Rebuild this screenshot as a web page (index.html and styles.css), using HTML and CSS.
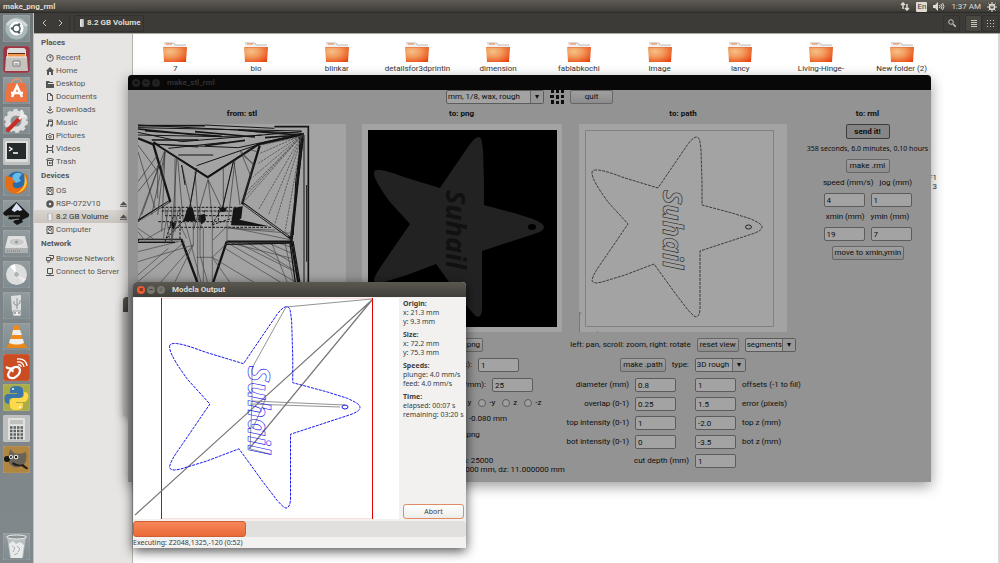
FILE: index.html
```html
<!DOCTYPE html>
<html lang="en">
<head>
    <meta charset="UTF-8">
    <meta name="viewport" content="width=device-width, initial-scale=1.0">
    <title>make_png_rml</title>
    <link rel="stylesheet" href="styles.css">
</head>
<body>
    <svg class="defs" width="0" height="0" aria-hidden="true">
        <defs>
            <radialGradient id="folderFill" cx=".3" cy=".3" r=".9">
                <stop offset="0" stop-color="#f6c088"/><stop offset=".4" stop-color="#f29a5c"/><stop offset="1" stop-color="#e8400c"/>
            </radialGradient>
            <path id="star" vector-effect="non-scaling-stroke" d="M13 49C13 46 15 46 19 46C28 47 37 51 46 54L79 64L96 39L109 20C112 16 115 13 118 13C121 14 121 18 122 26L123 58V81L153 89L172 95C178 98 183 100 183 103C183 106 179 108 173 110L121 127V154L121 184C121 189 120 192 117 193C114 192 112 189 109 186L96 169L75 140L46 151L23 158C19 159 13 160 13 156C14 151 18 145 23 138L49 100L29 78C24 71 13 56 13 49Z"/>
            <symbol id="folder" viewBox="0 0 24 20">
                <path d="M1 6V1h10l1 2h11v4z" fill="#f0f0f0"/><path d="M1 1h10l1 2h11" stroke="#bbb" fill="none"/><path d="M3 2h6" stroke="#f08040"/>
                <path d="M0 5h24l-1 15H1z" fill="url(#folderFill)"/><path d="M1 5.500h22" stroke="#dd7447" stroke-opacity=".6"/>
            </symbol>
        </defs>
    </svg>

    <header class="panel">
        <span class="panel-title">make_png_rml</span>
        <div class="indicators">
            <svg width="10" height="9" viewBox="0 0 10 9" fill="none" stroke="#dfdbd2" stroke-width="1.5"><path d="M3 7V1M1 3l2-2 2 2M7 2v6M5 6l2 2 2-2"/></svg>
            <span class="lang">En</span>
            <svg width="12" height="9" viewBox="0 0 12 9"><path d="M0 3h2l3-3v9L2 6H0z" fill="#dfdbd2"/><path d="M6.500 3q1 1.500 0 3M8 2q2 2.500 0 5M9.500 1q3 3.500 0 7" stroke="#dfdbd2" fill="none"/></svg>
            <span>1:37 AM</span>
            <svg width="10" height="10" viewBox="0 0 10 10" fill="none" stroke="#dfdbd2"><circle cx="5" cy="5" r="2.500" stroke-width="1.500"/><path d="M5 0v5M0 5h2M8 5h2M1.500 1.500l1.500 1.500M7 7l1.500 1.500M8.500 1.500L7 3M3 7L1.500 8.500M5 8v2"/></svg>
        </div>
    </header>

    <div class="desktop">
        <nav class="launcher" aria-label="Launcher">
            <div class="apps">
                <button class="app" aria-label="Dash"><svg viewBox="0 0 27 27"><circle cx="13.500" cy="13.500" r="11" fill="#a9b8bb"/><path d="M4 10Q12 0 24 11" stroke="#d2dadb" stroke-width="3" fill="none"/><circle cx="13.500" cy="13.500" r="7" fill="#fff"/><circle cx="13.500" cy="13.500" r="3.500" fill="none" stroke="#4d5a60" stroke-width="1.500"/><circle cx="9" cy="13.500" r="1.300" fill="#4d5a60"/><circle cx="16" cy="9.500" r="1.300" fill="#4d5a60"/><circle cx="16" cy="17.500" r="1.300" fill="#4d5a60"/></svg></button>
                <button class="app files" aria-label="Files"><svg viewBox="0 0 27 27"><path d="M4 5q0-3 3-3h13q3 0 3 3v8H4z" fill="#ddd"/><path d="M5 7h17v4H5z" fill="#532d16"/><path d="M5 8h17v3H5z" fill="#f19a4e"/><path d="M3 11h21l1 14H2z" fill="#c6c3be"/><path d="M3 11h21" stroke="#eee"/><path d="M10 15h7v5h-7z" fill="#eee" stroke="#777"/><path d="M11.500 18h4" stroke="#777"/></svg></button>
                <button class="app" aria-label="Software Center"><svg viewBox="0 0 27 27"><path d="M8 8q1-6 6-6t5 6" fill="none" stroke="#f09063" stroke-width="1.500"/><path d="M4 6h19l2 19H2z" fill="#ed7442"/><path d="M9 20l5-11 5 11M8 16h12" fill="none" stroke="#fff" stroke-width="2.500"/></svg></button>
                <button class="app" aria-label="System Settings"><svg viewBox="0 0 27 27"><circle cx="13" cy="14" r="8" fill="none" stroke="#ddd" stroke-width="5"/><circle cx="13" cy="14" r="11" fill="none" stroke="#ddd" stroke-width="2" stroke-dasharray="4 3"/><path d="M5 23L17 11" stroke="#c92d26" stroke-width="4" stroke-linecap="round"/><path d="M16 12L21 7" stroke="#eee" stroke-width="3"/><path d="M19 3q-2 6 4 6" stroke="#eee" stroke-width="2" fill="none"/></svg></button>
                <button class="app light" aria-label="Terminal"><svg viewBox="0 0 27 27"><rect x="2" y="3" width="23" height="21" rx="1" fill="#ddd"/><rect x="4" y="5" width="19" height="16" fill="#252a2b"/><path d="M6 9l3 2-3 2M10 15h5" fill="none" stroke="#fff" stroke-width="1.300"/></svg></button>
                <button class="app" aria-label="Firefox"><svg viewBox="0 0 27 27"><circle cx="14" cy="13" r="10.500" fill="#2a6bb0"/><path d="M10 6q4-4 9-1l-3 4 2 3-5 2-4-4z" fill="#65bde7"/><path d="M3 7q-4 17 11 18 11-1 11-14 0-5-4-7 5 12-5 15-7 1-6-5l3-1q-3-1-4-5z" fill="#e66c16"/><path d="M21 5q5 8 1 14-4 5-9 5 11-4 8-19" fill="#fbc83a"/></svg></button>
                <button class="app" aria-label="Inkscape"><svg viewBox="0 0 27 27"><path d="M13.500 2L26 14q1 3-3 4l-4 2 1 2-6 3-4-3 2-2-7-1 1-2-5-2q-2-2 1-4z" fill="#151515"/><path d="M13.500 3l6 7-3 1-2-1-3 2-3-2z" fill="#d7e1ef"/><path d="M4 16h13M9 20l7-1" stroke="#909798"/></svg></button>
                <button class="app" aria-label="Disk"><svg viewBox="0 0 27 27"><path d="M5 6h17l3 12H2z" fill="#ddd"/><path d="M2 18h23v5H2z" fill="#aeb0b0"/><ellipse cx="13.500" cy="12" rx="8" ry="4" fill="#c9caca" stroke="#eee"/><path d="M4 21h14" stroke="#777" stroke-dasharray="1 1"/><circle cx="13.500" cy="12" r="1.500" fill="#999"/></svg></button>
                <button class="app" aria-label="Disc"><svg viewBox="0 0 27 27"><circle cx="13.500" cy="13.500" r="10.500" fill="#dcdddd"/><path d="M13.500 13.500L7 5l5-2z" fill="#fff"/><path d="M13.500 13.500L20 22l3-4z" fill="#f4e8ef"/><circle cx="13.500" cy="13.500" r="3" fill="#afb4b5" stroke="#eee"/></svg></button>
                <button class="app" aria-label="USB drive"><svg viewBox="0 0 27 27"><path d="M8 4l10-1v17H9z" fill="#dde0e1"/><path d="M10 19h8v5h-8z" fill="#f0f0f0" stroke="#999"/><path d="M11 21h2M15 21h2" stroke="#555"/><path d="M14 6v11M11 9v3l3 2M17 8v3l-3 2" fill="none" stroke="#8d9294"/></svg></button>
                <button class="app" aria-label="VLC"><svg viewBox="0 0 27 27"><path d="M6 20h15l4 5H3z" fill="#e88717"/><path d="M11 3q3-2 5 0l5 18q-7 4-15 0z" fill="#f28a1c"/><path d="M10 7h7l2 5H9zM7 16h13l1 4q-7 3-15 0z" fill="#eee"/></svg></button>
                <button class="app red" aria-label="Feed reader"><svg viewBox="0 0 27 27" fill="none" stroke="#fff"><path d="M3 13q4 3 9 0-6 3-7 8 1 4 6 3 6-3 6-8-1-4-5-3-4 1-2 5" stroke-width="2.200"/><path d="M14 8q6-1 7 5M14 5q9-1 10 7M15 11q3-1 3 2" stroke-width="1.300"/></svg></button>
                <button class="app olive" aria-label="Python"><svg viewBox="0 0 27 27"><path d="M13 2q-6 0-6 4v3h7v1H4q-4 2-2 8 1 2 4 2v-3q0-3 4-3h6q4 0 4-4V6q0-4-7-4z" fill="#3b75a9"/><path d="M14 26q6 0 6-4v-3h-7v-1h9q4-2 3-8-1-2-4-2v3q0 3-4 3h-6q-4 0-4 4v4q0 4 6 4z" fill="#ffd94a"/><circle cx="10" cy="5" r="1" fill="#fff"/><circle cx="17" cy="23" r="1" fill="#fff"/></svg></button>
                <button class="app light" aria-label="Calculator"><svg viewBox="0 0 27 27"><rect x="5" y="3" width="17" height="22" rx="1" fill="#e0e1df"/><path d="M7 5h13v4H7z" fill="#bfc1bc"/><path d="M7 12.500h13M7 16h13M7 19.500h13M7 23h13" stroke="#5d6464" stroke-width="2.500" stroke-dasharray="2.500 1"/></svg></button>
                <button class="app brown" aria-label="GIMP"><svg viewBox="0 0 27 27"><path d="M5 12L7 3l4 4q6 2 12-1 2 10-4 14-8 4-13-3z" fill="#69645a"/><circle cx="4" cy="13" r="3" fill="#171717"/><circle cx="8" cy="11" r="2" fill="#eee"/><circle cx="13" cy="11" r="2.300" fill="#eee"/><circle cx="8" cy="11" r="1" fill="#111"/><circle cx="13" cy="11" r="1.200" fill="#111"/><path d="M10 16q6 4 10 2l5 4q0 2-2 1l-5-3q-6 1-9-2z" fill="#25211b"/></svg></button>
            </div>
            <button class="app" aria-label="Trash"><svg viewBox="0 0 27 27"><path d="M4 3h19l-3 22H7z" fill="#b8c0c1"/><path d="M6 11l4-3 3 3 4-2 4 3-2 13H8z" fill="#e9ebeb"/><path d="M9 13l3 2-2 4M14 13l3 3-2 3M11 22l4-2" stroke="#abb1b2" fill="none"/><ellipse cx="13.500" cy="4" rx="10" ry="2" fill="#8c9495" stroke="#eee"/></svg></button>
        </nav>

        <main class="files-window">
            <div class="toolbar">
                <div class="nav-buttons">
                    <button aria-label="Back"><svg width="6" height="8" viewBox="0 0 6 8"><path d="M5 1L2 4l3 3"/></svg></button>
                    <button aria-label="Forward"><svg width="6" height="8" viewBox="0 0 6 8"><path d="M1 1l3 3-3 3"/></svg></button>
                </div>
                <button class="crumb"><span class="drive"></span>8.2 GB Volume</button>
                <div class="view-buttons">
                    <button aria-label="Search"><svg width="8" height="8" viewBox="0 0 8 8"><circle cx="3" cy="3" r="2.300"/><path d="M5 5l3 3" stroke-width="1.500"/></svg></button>
                    <button class="on" aria-label="List view"><svg width="6" height="7" viewBox="0 0 6 7"><path d="M0 .5h6M0 2.500h6M0 4.500h6M0 6.500h6"/></svg></button>
                    <button aria-label="Grid view"><svg width="7" height="7" viewBox="0 0 7 7"><path d="M0 .5h7M0 3.500h7M0 6.500h7" stroke-dasharray="1 2"/></svg></button>
                </div>
            </div>
            <div class="browser">
                <aside class="places">
                    <h2>Places</h2>
                    <ul>
                        <li><svg viewBox="0 0 8 8"><circle cx="4" cy="4" r="3.300"/><path d="M4 1.500V4l1.500-1"/></svg>Recent</li>
                        <li><svg viewBox="0 0 8 8"><path class="solid" d="M0 4l4-4 4 4H7v4H5V5H3v3H1V4z"/></svg>Home</li>
                        <li><svg viewBox="0 0 8 8"><path class="solid" d="M0 1h3l1 1h3v1H2v1h6v4H0z"/></svg>Desktop</li>
                        <li><svg viewBox="0 0 8 8"><path d="M1.500.5h3l2 2v5h-5zM4.500.5v2h2"/></svg>Documents</li>
                        <li><svg viewBox="0 0 8 8"><path d="M4 0v5M2 3l2 2 2-2M1 5q0 2 3 2t3-2"/></svg>Downloads</li>
                        <li><svg viewBox="0 0 8 8"><path d="M2.500 6V1h4v5M2.500 2.500h4"/><circle class="solid" cx="1.500" cy="6.500" r="1.200"/><circle class="solid" cx="5.500" cy="6.500" r="1.200"/></svg>Music</li>
                        <li><svg viewBox="0 0 8 8"><path d="M.5 2.500h2l1-1h1l1 1h2v5h-7z"/><circle cx="4" cy="4.800" r="1.300"/></svg>Pictures</li>
                        <li><svg viewBox="0 0 8 8"><path d="M1.500 0v8M6.500 0v8M1 2.500h6M1 5.500h6M0 1h1M0 7h1M7 1h1M7 7h1"/></svg>Videos</li>
                        <li><svg viewBox="0 0 8 8"><path d="M0 2.500Q0 .5 4 .5t4 2M1 2.500h6M1.500 2.500v5h5v-5M3.500 4v2M5 4v2"/></svg>Trash</li>
                    </ul>
                    <h2>Devices</h2>
                    <ul>
                        <li><svg viewBox="0 0 8 8"><path d="M1 .5h6v7H1zM2 6.500h1M5 6h1"/><circle cx="4" cy="3" r="1.500"/></svg>OS</li>
                        <li><svg viewBox="0 0 8 8"><circle cx="4" cy="4" r="2.500" stroke-width="2.500"/></svg>RSP-072V10<svg class="eject" viewBox="0 0 8 8"><path class="solid" d="M0 5l4-4 4 4zM0 6h8v1H0z"/></svg></li>
                        <li class="selected"><svg viewBox="0 0 8 8"><rect x="2" y="0" width="4" height="8" rx="1" fill="#eee" stroke="#aaa"/></svg>8.2 GB Volume<svg class="eject" viewBox="0 0 8 8"><path class="solid" d="M0 5l4-4 4 4zM0 6h8v1H0z"/></svg></li>
                        <li><svg viewBox="0 0 8 8"><path d="M1 .5h6v7H1zM2 6.500h1M5 6h1"/><circle cx="4" cy="3" r="1.500"/></svg>Computer</li>
                    </ul>
                    <h2>Network</h2>
                    <ul>
                        <li><svg viewBox="0 0 8 8"><path d="M3 .5h4.500v3H5M.5 2.500h4v3h-4zM1 7h3M5 5h2"/></svg>Browse Network</li>
                        <li><svg viewBox="0 0 8 8"><path d="M1.500.5h5v5h-5zM0 7.500h8M4 5v2"/></svg>Connect to Server</li>
                    </ul>
                </aside>
                <section class="folders">
                    <figure><svg><use href="#folder"/></svg><figcaption>7</figcaption></figure>
                    <figure><svg><use href="#folder"/></svg><figcaption>bio</figcaption></figure>
                    <figure><svg><use href="#folder"/></svg><figcaption>blinkar</figcaption></figure>
                    <figure><svg><use href="#folder"/></svg><figcaption>detailsfor3dprintin</figcaption></figure>
                    <figure><svg><use href="#folder"/></svg><figcaption>dimension</figcaption></figure>
                    <figure><svg><use href="#folder"/></svg><figcaption>fablabkochi</figcaption></figure>
                    <figure><svg><use href="#folder"/></svg><figcaption>Image</figcaption></figure>
                    <figure><svg><use href="#folder"/></svg><figcaption>lancy</figcaption></figure>
                    <figure><svg><use href="#folder"/></svg><figcaption>Living-Hinge-<br>Switchplates</figcaption></figure>
                    <figure><svg><use href="#folder"/></svg><figcaption>New folder (2)</figcaption></figure>
                    <figure class="tail"><figcaption>F1<br>3</figcaption></figure>
                </section>
            </div>
        </main>
    </div>

    <div class="window back-window"><div class="titlebar"></div></div>

    <section class="window stl-window">
        <div class="titlebar">
            <span class="dot">×</span><span class="dot">−</span><span class="dot">▫</span>
            <span class="name">make_stl_rml</span>
        </div>
        <div class="top-row">
            <span class="combo preset"><select aria-label="Preset"><option>mm, 1/8, wax, rough</option></select></span>
            <svg width="14" height="14" viewBox="0 0 14 14" fill="#0c0c0c"><path d="M1 0h3v3H1zM6 0h3v3H6zM11 0h3v3h-3zM0 5h4v3H0zM6 5h3v4H6zM11 5h3v3h-3zM1 10h3v4H1zM6 11h3v3H6zM11 10h3v4h-3z"/></svg>
            <button class="quit">quit</button>
        </div>
        <div class="columns">
            <div class="col">
                <h3>from: stl</h3>
                <svg class="canvas" viewBox="39 27 624 624" fill="none" stroke="#151515">
                    <path stroke-width="7" d="M39 70L85 88L135 258L39 318M85 82L248 186L400 88L533 58L500 372L352 264L404 92M533 58L498 372L521 510M39 375H170L220 510M305 380H500M305 380L262 510"/>
                    <path stroke-width="3" stroke="#a5a5a5" d="M104 90L248 181L394 86M356 268L490 364M42 319L132 260M42 376H168"/>
                    <path stroke-width="5" d="M39 32H240M448 35H550V510M39 42L200 58M60 47L290 64M80 75H220M210 50L390 66M240 92L360 76M340 45L520 60M420 68L525 60"/>
                    <path stroke-width="3" d="M537 60V510M545 210V440M39 52L170 80L410 60M39 38L530 48M100 88L340 98L530 57M130 100L300 82M39 30L530 55M96 88L220 96M160 120H265M39 60L340 66L530 50M215 152L390 92M240 30L448 40"/>
                    <path stroke-width="2" stroke="#333" d="M39 90L98 170M39 110L90 280M39 200L98 120M39 230L103 150L50 300M80 300L120 110L110 350M98 150V250M120 105L39 320M120 110L98 300M150 130V350M155 130L140 378M158 130L175 320M170 150L200 280M215 160L192 290M210 170L218 290M250 190L205 345M250 195L265 340M250 195L295 290M295 160V290M325 140L290 290M327 140L345 270M330 135L310 310M345 105L385 150L352 262M345 105L380 190M365 100L395 110M352 120L390 150"/>
                    <path stroke-width="2" stroke="#3d3d3d" stroke-dasharray="7 3" d="M355 262L532 60L370 225M532 60L355 250M532 60L400 285M532 60L430 300M532 60L450 325M532 60L480 350M532 60L497 365M532 60L405 115M532 60L400 145M532 60L385 185M527 65L408 90"/>
                    <path stroke-width="3" d="M530 70L512 200L505 360M525 65L520 180L500 370M535 70L508 290M215 160L192 290M325 140L290 290M170 150L180 210"/>
                    <path stroke-width="3" stroke-dasharray="8 4" d="M110 277H352M110 288H350M120 302H330M100 320H350M130 337H440M145 305L120 380M165 280V375M205 285L125 370M290 280L260 330L320 310M280 285V320M240 285L225 345"/>
                    <path fill="#151515" stroke="none" d="M188 277l15 2 10 40h-38zM222 300l18-3 3 18-12 12-12-13zM282 278h24l-5 12h-16zM325 280l28-6-4 36-6 4 90 20-115-3zM133 320l22 3-10 22z"/>
                    <path stroke-width="2" stroke="#444" d="M120 280L135 378M130 280L115 370M140 280V380M150 300L185 370M160 285L140 378M180 320L230 510M205 320V390L150 500M218 290V510M225 280V420L250 510M235 340V510M262 330V510M306 320V380M39 350L58 375L120 340M39 340L90 375M264 375L305 335L500 375M320 340L500 355M305 340L450 345M205 390L39 440M205 390L100 510M180 380L39 500M160 380L39 410M215 427H262L305 385M262 427L400 510M262 427L320 510M300 400L480 510M310 385L510 500M320 385L500 430M340 385L510 470M370 385L515 470M400 384L515 450M430 384L512 420M460 384L510 400M440 384L490 510M480 384L508 510M39 480L130 400"/>
                    <path stroke-width="4" d="M305 388L500 384M39 382H150M504 378L526 510M494 378L512 510"/>
                </svg>
            </div>
            <div class="col">
                <h3>to: png</h3>
                <svg class="canvas png" viewBox="0 0 200 208">
                    <path d="M6 6h189v197H6z"/>
                    <use href="#star" x="-1" fill="#222"/>
                    <ellipse cx="170" cy="103" rx="4" ry="3" fill="#000"/>
                    <text class="carved" transform="translate(84 66) rotate(90)">Suhail</text>
                </svg>
                <div class="row"><button>make .png</button></div>
                <div class="row"><label class="hint" for="gray">(pack):</label><input id="gray" value="1"></div>
                <div class="row"><label class="hint res" for="res">/mm):</label><input id="res" value="25"></div>
                <div class="row radios">
                    <label><input type="radio" name="axis">y</label><label><input type="radio" name="axis">-y</label>
                    <label><input type="radio" name="axis">z</label><label><input type="radio" name="axis">-z</label>
                </div>
                <p class="depth">z: -0.080 mm</p>
                <p>suhail.png</p>
                <p class="stats">triangles n: 25000<br>dx: 72.200000 mm, dy: 75.300000 mm, dz: 11.000000 mm</p>
            </div>
            <div class="col">
                <h3>to: path</h3>
                <svg class="canvas" viewBox="0 0 208 208" fill="none" stroke="#222">
                    <path d="M6.500 6.500h188v196h-188z" stroke="#818181"/>
                    <path d="M.5 208v-20l2 2M18 207l2 2" stroke="#777"/>
                    <use href="#star" stroke-dasharray="3 1" stroke-width=".8"/>
                    <ellipse cx="169.500" cy="103" rx="3" ry="2"/>
                    <text class="outline" transform="translate(84 66) rotate(90)">Suhail</text>
                </svg>
                <div class="row"><span>left: pan, scroll: zoom, right: rotate</span><button>reset view</button><span class="combo"><select aria-label="Display"><option>segments</option></select></span></div>
                <div class="row"><button>make .path</button><label for="type">type:</label><span class="combo"><select id="type"><option>3D rough</option></select></span></div>
                <div class="params">
                    <label for="dia">diameter (mm)</label><input id="dia" value="0.8"><input class="second" id="off" value="1"><label for="off">offsets (-1 to fill)</label>
                    <label for="over">overlap (0-1)</label><input id="over" value="0.25"><input class="second" id="err" value="1.5"><label for="err">error (pixels)</label>
                    <label for="ti">top intensity (0-1)</label><input id="ti" value="1"><input class="second" id="tz" value="-2.0"><label for="tz">top z (mm)</label>
                    <label for="bi">bot intensity (0-1)</label><input id="bi" value="0"><input class="second" id="bz" value="-3.5"><label for="bz">bot z (mm)</label>
                    <label class="wide" for="cut">cut depth (mm)</label><input class="second" id="cut" value="1">
                </div>
            </div>
            <div class="col rml">
                <h3>to: rml</h3>
                <button class="send">send it!</button>
                <p>358 seconds, 6.0 minutes, 0.10 hours</p>
                <button class="make">make .rml</button>
                <div class="row"><label for="speed">speed (mm/s)</label><label for="jog">jog (mm)</label></div>
                <div class="row"><input id="speed" value="4"><input id="jog" value="1"></div>
                <div class="row"><label for="xmin">xmin (mm)</label><label for="ymin">ymin (mm)</label></div>
                <div class="row"><input id="xmin" value="19"><input id="ymin" value="7"></div>
                <button class="move">move to xmin,ymin</button>
            </div>
        </div>
    </section>

    <section class="window modela">
        <div class="titlebar">
            <span class="dot close">×</span><span class="dot">−</span><span class="dot">▫</span>
            <span class="name">Modela Output</span>
        </div>
        <div class="job">
            <svg class="plot" viewBox="0 0 265 221" fill="none">
                <path d="M27 .5h211M27 220.500h211" stroke="#fdd"/>
                <path d="M27.500 0v221M238.500 0v221" stroke="#e00000"/>
                <g stroke="#777">
                    <path d="M1 217L238 2L115 151" stroke-width="1.200"/>
                    <path d="M238 1L152 9L118 70V103L211 107M116 106L206 109M118 103L116 151L136 156M119 130l13-30" stroke-width=".8"/>
                </g>
                <g stroke="#1818f0">
                    <use href="#star" transform="translate(21 -6) scale(1.120)" stroke-dasharray="3 1"/>
                    <ellipse cx="211" cy="109" rx="3" ry="2"/>
                    <text class="outline big" transform="translate(114 68) rotate(90)">Suhail</text>
                </g>
            </svg>
            <div class="info">
                <dl>
                    <dt>Origin:</dt><dd>x: 21.3 mm</dd><dd>y: 9.3 mm</dd>
                    <dt>Size:</dt><dd>x: 72.2 mm</dd><dd>y: 75.3 mm</dd>
                    <dt>Speeds:</dt><dd>plunge: 4.0 mm/s</dd><dd>feed: 4.0 mm/s</dd>
                    <dt>Time:</dt><dd>elapsed: 00:07 s</dd><dd>remaining: 03:20 s</dd>
                </dl>
                <button class="abort">Abort</button>
            </div>
        </div>
        <div class="progress"><div class="bar" style="width: 34%"></div></div>
        <p class="status">Executing: Z2048,1325,-120 (0:52)</p>
    </section>
</body>
</html>
```
FILE: styles.css
```css
* { margin: 0; padding: 0; box-sizing: border-box; }
body { height: 100vh; display: flex; flex-direction: column; overflow: hidden; background: #fff; color: #3c3c3c; font: 8px/10px Roboto, "Noto Sans", sans-serif; }
button, input, select { font: inherit; color: inherit; }
button { border: none; background: none; white-space: nowrap; }
ul { list-style: none; }
.defs { position: absolute; }

/* Top panel */
.panel { height: 13px; flex: none; display: flex; justify-content: space-between; align-items: center; padding: 0 3px; background: linear-gradient(#5d5b52, #413f3a 85%, #262522); color: #dfdbd2; }
.panel-title { font-weight: bold; }
.indicators { display: flex; align-items: center; gap: 6px; }
.lang { padding: 0 1px; border-radius: 1px; background: #dfdbd2; color: #3c3b37; }

.desktop { flex: 1; display: flex; min-height: 0; }

/* Launcher */
.launcher { width: 34px; display: flex; flex-direction: column; justify-content: space-between; padding: 2px 4px 3px 3px; background: linear-gradient(#717779, #7d8487 30%, #81888b); border-right: 1px solid #c0c3c4; }
.apps { flex: 0 1 458px; display: flex; flex-direction: column; justify-content: space-between; }
.app { width: 27px; height: 27px; border-radius: 2px; background: linear-gradient(#929b9e, #7f8b8f); box-shadow: inset 0 0 1px #d8dedf; }
.app svg { display: block; }
.app.files { background: #9c3442; }
.app.light { background: #bec0bf; }
.app.red { background: #cb4c22; }
.app.olive { background: #aaac4a; }
.app.brown { background: #b18640; }

/* File browser */
.files-window { flex: 1; display: flex; flex-direction: column; min-width: 0; }
.toolbar { height: 21px; flex: none; display: flex; align-items: center; padding: 0 1px; background: #3c3b37; border-bottom: 1px solid #a9a7a2; color: #dfdbd2; }
.toolbar button { height: 17px; display: flex; align-items: center; justify-content: center; }
.toolbar svg { flex: none; fill: none; stroke: #c9c5bb; }
.nav-buttons, .view-buttons { display: flex; }
.nav-buttons { width: 35px; margin-right: 4px; border-right: 1px solid #33322e; }
.nav-buttons button { width: 17px; }
.toolbar .crumb { gap: 3px; padding: 0 3px 0 5px; border: 1px solid #32312d; border-radius: 2px; font-weight: bold; }
.drive { width: 4px; height: 8px; border-radius: 1px; background: linear-gradient(90deg, #eee, #aaa); }
.view-buttons { margin-left: auto; }
.view-buttons button { width: 17px; border: 1px solid #33322e; border-radius: 2px; }
.view-buttons .on { margin-left: 5px; background: #484742; }
.browser { flex: 1; display: flex; min-height: 0; }
.places { width: 99px; flex: none; padding-top: 1px; background: #e6e5e3; border-right: 1px solid #b5b2ad; color: #555; }
.places h2 { padding-left: 7px; font-size: 8px; line-height: 16px; }
.places li { display: flex; align-items: center; gap: 2px; height: 13px; padding: 0 5px 0 12px; white-space: nowrap; }
.places li svg { width: 8px; height: 8px; flex: none; fill: none; stroke: #555; }
.places .solid { fill: #555; stroke: none; }
.places li .eject { width: 7px; margin-left: auto; }
.places .selected { background: linear-gradient(#d8d4cf, #c9c4be); color: #333; }
.folders { flex: 1; display: grid; grid-template-columns: repeat(10, 1fr); align-content: start; padding: 8px 56px 0 2px; border-right: 2px solid #d9d7d4; }
.folders figure { height: 104px; text-align: center; white-space: nowrap; color: #333; }
.folders figure svg { display: block; width: 24px; height: 20px; margin: 0 auto 2px; }
.folders figcaption { line-height: 9px; }
.folders .tail { grid-column: 10; padding: 27px 5px 0 0; text-align: right; }

/* Windows */
.window { position: absolute; border-radius: 4px 4px 0 0; }
.titlebar { height: 15px; display: flex; align-items: center; gap: 2px; padding: 0 4px; border-radius: 4px 4px 0 0; background: linear-gradient(#5a5850, #403f3a); color: #dfdbd2; font-weight: bold; font-size: 8px; }
.titlebar .name { margin-left: 5px; }
.dot { width: 8px; height: 8px; border-radius: 50%; background: #77756c; color: #3a3934; text-align: center; line-height: 8px; }
.dot.close { background: #ee5d33; color: #6b210d; }

.back-window { left: 123px; top: 297px; width: 300px; height: 119px; background: #bbb; box-shadow: 0 2px 8px rgba(0, 0, 0, 0.3); }

.stl-window { left: 128px; top: 75px; width: 803px; height: 407px; background: #939393; color: #0d0d0d; box-shadow: 0 4px 14px rgba(0, 0, 0, 0.4); }
.stl-window .titlebar { background: #080808; color: #303030; }
.stl-window .dot { background: #222; color: #080808; }
.stl-window button { height: 14px; padding: 0 2px; border: 1px solid #666; border-radius: 2px; background: linear-gradient(#9f9f9f, #8c8c8c); }
.stl-window input { width: 41px; height: 14px; padding: 0 2px; border: 1px solid #5c5c5c; border-radius: 2px; background: #a3a3a3; }
.top-row { display: flex; align-items: center; gap: 6px; padding-left: 318px; }
.stl-window .quit { width: 43px; }
.combo { width: 51px; display: flex; height: 14px; border: 1px solid #5c5c5c; border-radius: 2px; background: #a3a3a3; }
.combo select { flex: 1; min-width: 0; padding-left: 1px; border: none; background: none; appearance: none; }
.combo::after { content: "▾"; width: 12px; flex: none; border-left: 1px solid #666; background: #979797; text-align: center; line-height: 12px; }
.preset { width: 98px; }
.columns { display: grid; grid-template-columns: 228px 211px 232px 1fr; margin-top: 5px; }
.col { display: flex; flex-direction: column; align-items: center; gap: 6px; white-space: nowrap; }
.col h3 { margin-bottom: -1px; font-size: 8px; }
.canvas { width: 208px; height: 208px; flex: none; background: #a3a3a3; }
.canvas.png { width: 200px; }
.row { display: flex; align-items: center; justify-content: center; gap: 6px; }
.hint { width: 68px; text-align: right; }
.hint.res { width: 96px; }
.radios { width: 160px; justify-content: flex-end; gap: 7px; }
.radios label { display: flex; align-items: center; gap: 3px; }
.stl-window .radios input { width: 8px; height: 8px; appearance: none; border-radius: 50%; background: #a0a0a0; }
.depth { width: 91px; text-align: right; }
.stats { margin-top: 10px; text-align: center; line-height: 9px; }
.carved, .outline { font: italic bold 27px "Noto Sans", sans-serif; fill: #111; }
.outline { fill: none; stroke-width: 0.6; }
.outline.big { font-size: 30px; }
.params { align-self: stretch; display: grid; grid-template-columns: 62px 41px 7px 41px 1fr; gap: 5px 6px; align-items: center; }
.params label { justify-self: end; }
.params .second { grid-column: 4; }
.params .second + label { justify-self: start; }
.params .wide { grid-column: 1 / 4; }
.rml { gap: 5px; padding-left: 5px; }
.rml h3 { margin: 0; }
.rml p { font-family: "Noto Sans", sans-serif; font-size: 7px; }
.stl-window .send { width: 44px; height: 15px; border-color: #3c3c3c; background: #858585; font-weight: bold; }
.stl-window .make { width: 44px; }
.stl-window .move { width: 72px; }

/* Modela output */
.modela { left: 133px; top: 282px; width: 333px; background: #f2f1f0; font-family: "Noto Sans", sans-serif; font-size: 7px; box-shadow: 0 3px 12px rgba(0, 0, 0, 0.7); }
.modela .titlebar { font-family: Roboto, sans-serif; }
.job { display: flex; padding: 1px 2px 2px 1px; }
.plot { width: 265px; height: 221px; flex: none; background: #fff; }
.info { flex: 1; min-width: 0; display: flex; flex-direction: column; justify-content: space-between; padding-left: 4px; white-space: nowrap; }
.info dl { line-height: 9px; }
.info dt { margin-top: 4px; font-weight: bold; }
.info dt:first-child { margin-top: 1px; }
.abort { height: 15px; border: 1px solid #e08a66; border-radius: 3px; background: linear-gradient(#fff, #ececeb); }
.progress { height: 16px; border-radius: 3px; background: #e1e0de; }
.bar { height: 16px; border: 1px solid #cf6035; border-radius: 3px; background: linear-gradient(#f68659, #ea6a37); }
.status { line-height: 11px; }
```
